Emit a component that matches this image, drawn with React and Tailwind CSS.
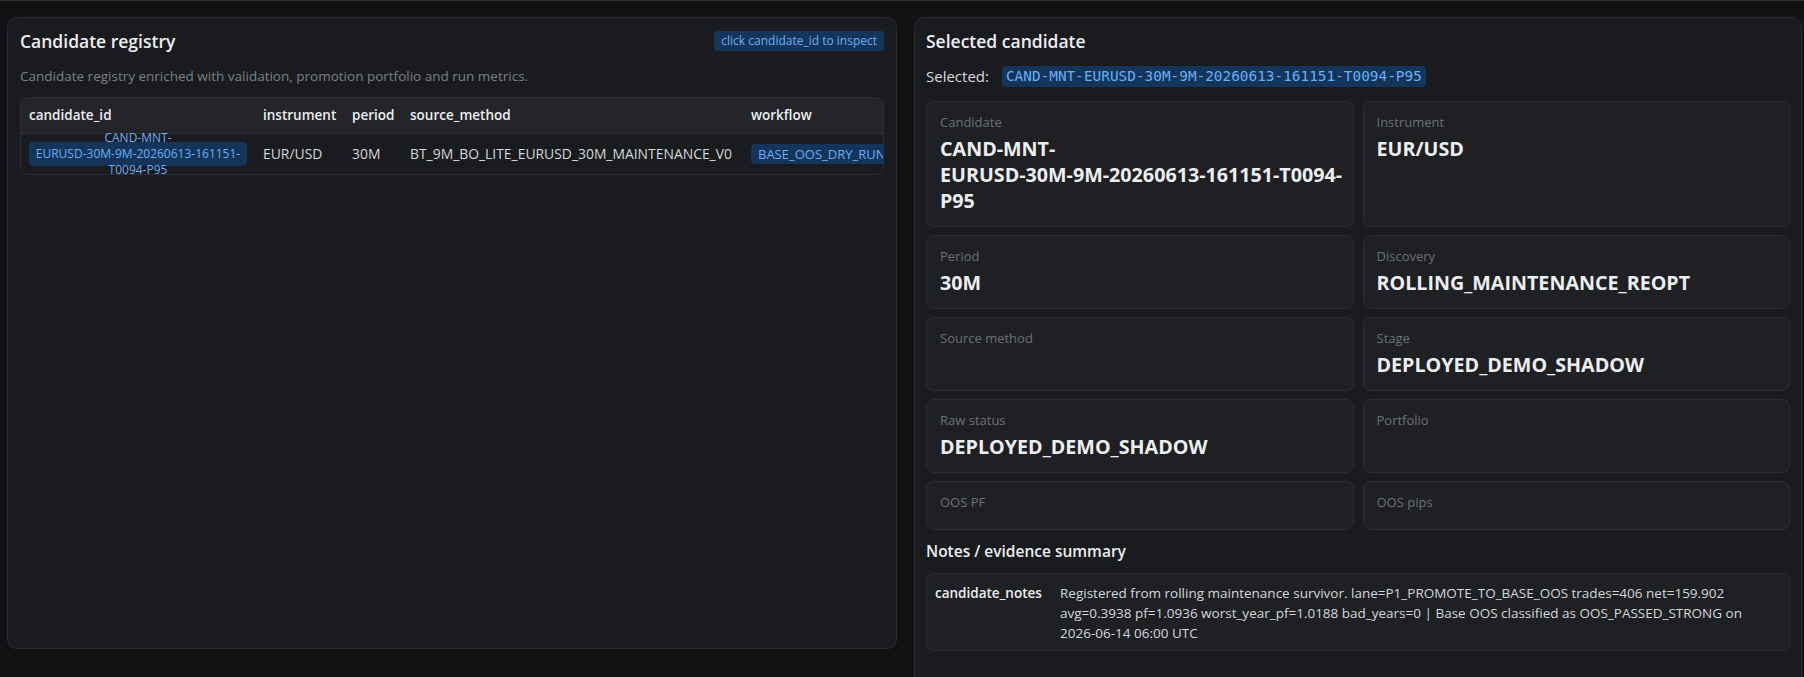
import React from 'react'

const FIELDS = [
  { label: 'Candidate', lines: ['CAND-MNT-', 'EURUSD-30M-9M-20260613-161151-T0094-', 'P95'] },
  { label: 'Instrument', lines: ['EUR/USD'] },
  { label: 'Period', lines: ['30M'] },
  { label: 'Discovery', lines: ['ROLLING_MAINTENANCE_REOPT'] },
  { label: 'Source method', lines: [] },
  { label: 'Stage', lines: ['DEPLOYED_DEMO_SHADOW'] },
  { label: 'Raw status', lines: ['DEPLOYED_DEMO_SHADOW'] },
  { label: 'Portfolio', lines: [] },
  { label: 'OOS PF', lines: [] },
  { label: 'OOS pips', lines: [] },
]

const NOTE_LINES = [
  'Registered from rolling maintenance survivor. lane=P1_PROMOTE_TO_BASE_OOS trades=406 net=159.902',
  'avg=0.3938 pf=1.0936 worst_year_pf=1.0188 bad_years=0 | Base OOS classified as OOS_PASSED_STRONG on',
  '2026-06-14 06:00 UTC',
]

const Field = ({ label, lines }) => (
  <div className="rounded-[8px] border border-[#2c2e33] bg-[#1f2023] px-[13px] pt-[12px] pb-[12px]">
    <div className="text-[13px] leading-[16px] text-[#6c7077]">{label}</div>
    <div className="mt-[6px] min-h-[1px] text-[19.7px] leading-[26px] font-bold text-[#eceef0]">
      {lines.map((line, i) => (
        <div key={i} className="whitespace-nowrap">{line}</div>
      ))}
    </div>
  </div>
)

const CandidateRegistry = () => (
  <section className="flex-1 min-w-0 h-[632px] rounded-[10px] border border-[#2a2c30] bg-[#1a1b1e] px-[12px] pt-[12px]">
    {/* Header */}
    <div className="flex h-[22px] items-center justify-between">
      <h2 className="text-[17.5px] font-semibold text-[#eceef0]">Candidate registry</h2>
      <span className="rounded-[3px] bg-[#15345a] px-[7px] text-[12px] leading-[20px] text-[#67b0f8]">
        click candidate_id to inspect
      </span>
    </div>
    <p className="mt-[14px] text-[13.5px] leading-[20px] text-[#7b8087]">
      Candidate registry enriched with validation, promotion portfolio and run metrics.
    </p>

    {/* Table */}
    <div className="mt-[11px] overflow-hidden rounded-[8px] border border-[#2c2e33]">
      <table className="w-[1100px] table-fixed border-collapse text-left text-[13.9px]">
        <colgroup>
          <col className="w-[234px]" />
          <col className="w-[89px]" />
          <col className="w-[58px]" />
          <col className="w-[341px]" />
          <col />
        </colgroup>
        <thead>
          <tr className="bg-[#232528] text-[13.5px] text-[#eceef0]">
            <th className="px-2 py-[8px] leading-[19px] font-semibold">candidate_id</th>
            <th className="px-2 py-[8px] leading-[19px] font-semibold">instrument</th>
            <th className="px-2 py-[8px] leading-[19px] font-semibold">period</th>
            <th className="px-2 py-[8px] leading-[19px] font-semibold">source_method</th>
            <th className="px-2 py-[8px] leading-[19px] font-semibold">workflow</th>
          </tr>
        </thead>
        <tbody>
          <tr className="border-t border-[#2e3035] text-[#d4d7db]">
            <td className="px-2 py-[8px] align-middle">
              <span className="flex h-[24px] w-[218px] items-center justify-center rounded-[4px] bg-[#15345a] text-center text-[12px] leading-[16px] text-[#67b0f8]">
                <span>
                  CAND-MNT-<br />EURUSD-30M-9M-20260613-161151-<br />T0094-P95
                </span>
              </span>
            </td>
            <td className="px-2 align-middle whitespace-nowrap">EUR/USD</td>
            <td className="px-2 align-middle whitespace-nowrap">30M</td>
            <td className="px-2 align-middle whitespace-nowrap">BT_9M_BO_LITE_EURUSD_30M_MAINTENANCE_V0</td>
            <td className="px-2 align-middle whitespace-nowrap">
              <span className="inline-block rounded-[4px] bg-[#15345a] px-[7px] text-[13px] leading-[20px] text-[#67b0f8]">
                BASE_OOS_DRY_RUN_PROMOTION
              </span>
            </td>
          </tr>
        </tbody>
      </table>
    </div>
  </section>
)

const SelectedCandidate = () => (
  <section className="flex-1 min-w-0 rounded-[10px] border border-[#2a2c30] bg-[#1a1b1e] px-[11px] pt-[12px] pb-[48px]">
    <h2 className="h-[22px] text-[17.5px] leading-[22px] font-semibold text-[#eceef0]">Selected candidate</h2>
    <div className="mt-[13px] flex h-[22px] items-center gap-[13px]">
      <span className="text-[15px] text-[#d7dade]">Selected:</span>
      <code className="rounded-[3px] bg-[#15345a] px-[4px] font-['DejaVu_Sans_Mono',monospace] text-[14.4px] leading-[21px] text-[#67b0f8]">
        CAND-MNT-EURUSD-30M-9M-20260613-161151-T0094-P95
      </code>
    </div>

    {/* Field cards */}
    <div className="mt-[14px] grid grid-cols-2 gap-x-[9px] gap-y-[8px]">
      {FIELDS.map((f) => (
        <Field key={f.label} {...f} />
      ))}
    </div>

    {/* Notes */}
    <h3 className="mt-[10px] text-[15.5px] leading-[22px] font-semibold text-[#eceef0]">Notes / evidence summary</h3>
    <div className="mt-[11px] grid grid-cols-[125px_1fr] rounded-[8px] border border-[#2c2e33] bg-[#1f2023] pl-[8px] pt-[9px] pb-[7px] text-[13.5px] leading-[20px]">
      <div className="font-semibold text-[#eceef0]">candidate_notes</div>
      <div className="text-[#d4d7db]">
        {NOTE_LINES.map((line, i) => (
          <div key={i} className="whitespace-nowrap">{line}</div>
        ))}
      </div>
    </div>
  </section>
)

export default function App() {
  return (
    <div className="h-[677px] overflow-hidden border-t border-[#2b2d31] bg-[#111214] font-['Open_Sans',sans-serif]">
      <div className="flex items-start gap-[17px] pl-[7px] pr-[2px] pt-[16px]">
        <CandidateRegistry />
        <SelectedCandidate />
      </div>
    </div>
  )
}
